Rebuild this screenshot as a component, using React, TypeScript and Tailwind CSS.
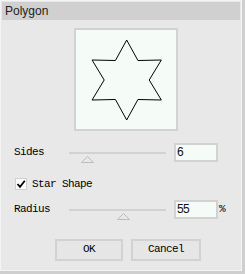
import React from 'react';

const mono = {
  fontFamily: '"Liberation Mono", "DejaVu Sans Mono", monospace',
  fontSize: '11px',
  letterSpacing: '-0.6px',
};

const starPoints = (cx: number, cy: number, ro: number, ri: number, n: number) => {
  const pts: string[] = [];
  for (let i = 0; i < n * 2; i++) {
    const r = i % 2 === 0 ? ro : ri;
    const a = -Math.PI / 2 + (i * Math.PI) / n;
    pts.push(`${(cx + r * Math.cos(a)).toFixed(2)},${(cy + r * Math.sin(a)).toFixed(2)}`);
  }
  return pts.join(' ');
};

const Slider: React.FC<{ thumb: number }> = ({ thumb }) => (
  <div className="relative w-[97px] h-[19px]">
    <div className="absolute left-0 right-0 top-[9px] h-[2px] bg-[#d2d2d2]" />
    <svg
      className="absolute top-[13px]"
      style={{ left: thumb }}
      width="13"
      height="7"
      viewBox="0 0 13 7"
    >
      <polygon points="0.5,6.5 6.5,0.5 12.5,6.5" fill="#e8e8e8" stroke="#bdbdbd" strokeWidth="1" />
    </svg>
  </div>
);

const NumberBox: React.FC<{ value: string }> = ({ value }) => (
  <div className="w-[44px] h-[19px] border-2 border-[#d2d2d2] bg-[#f5fbf7] pl-[1px] text-[12px] leading-[15px] text-[#111] font-['Liberation_Sans',Arial,sans-serif]">
    {value}
  </div>
);

export default function App() {
  return (
    <div className="w-[245px] h-[274px] bg-[#cfcfcf]">
      <div className="w-[242px] h-[271px] bg-[#e8e8e8] border border-[#f4f4f4] p-px flex flex-col">
        {/* Title */}
        <div className="h-[18px] bg-[#d0d0d0] pl-[3px] text-[12px] leading-[18px] text-[#222] font-['Liberation_Sans',Arial,sans-serif]">
          Polygon
        </div>

        {/* Preview */}
        <div className="mt-[8px] ml-[72px] w-[104px] h-[103px] border-2 border-[#d2d2d2] bg-[#f5fbf7]">
          <svg width="100" height="99" viewBox="0 0 100 99">
            <polygon points={starPoints(50.7, 50, 40, 22.5, 6)} fill="none" stroke="#000" strokeWidth="1" />
          </svg>
        </div>

        {/* Sides */}
        <div className="mt-[12px] pl-[12px] flex items-center text-black" style={mono}>
          <span className="w-[55px]">Sides</span>
          <Slider thumb={12} />
          <div className="ml-[8px]">
            <NumberBox value="6" />
          </div>
        </div>

        {/* Star shape */}
        <div className="mt-[14px] pl-[13px] flex items-center text-black" style={mono}>
          <div className="w-[12px] h-[12px] border border-[#cfcfcf] bg-[#fbfbfb] flex items-center justify-center">
            <svg width="10" height="10" viewBox="0 0 10 10">
              <path d="M1.5 5 L4 7.8 L8.8 1.8" fill="none" stroke="#000" strokeWidth="1.8" />
            </svg>
          </div>
          <span className="ml-[5px]">Star Shape</span>
        </div>

        {/* Radius */}
        <div className="mt-[7px] pl-[12px] flex items-center text-black" style={mono}>
          <span className="w-[55px]">Radius</span>
          <Slider thumb={48} />
          <div className="ml-[8px]">
            <NumberBox value="55" />
          </div>
          <span className="ml-[1px]">%</span>
        </div>

        {/* Buttons */}
        <div className="mt-[20px] pl-[53px] flex gap-[8px] text-black" style={mono}>
          <button className="w-[68px] h-[22px] border-2 border-[#d2d2d2] bg-[#e6e6e6] flex items-center justify-center">
            OK
          </button>
          <button className="w-[70px] h-[22px] border-2 border-[#d2d2d2] bg-[#e6e6e6] flex items-center justify-center">
            Cancel
          </button>
        </div>
      </div>
    </div>
  );
}
